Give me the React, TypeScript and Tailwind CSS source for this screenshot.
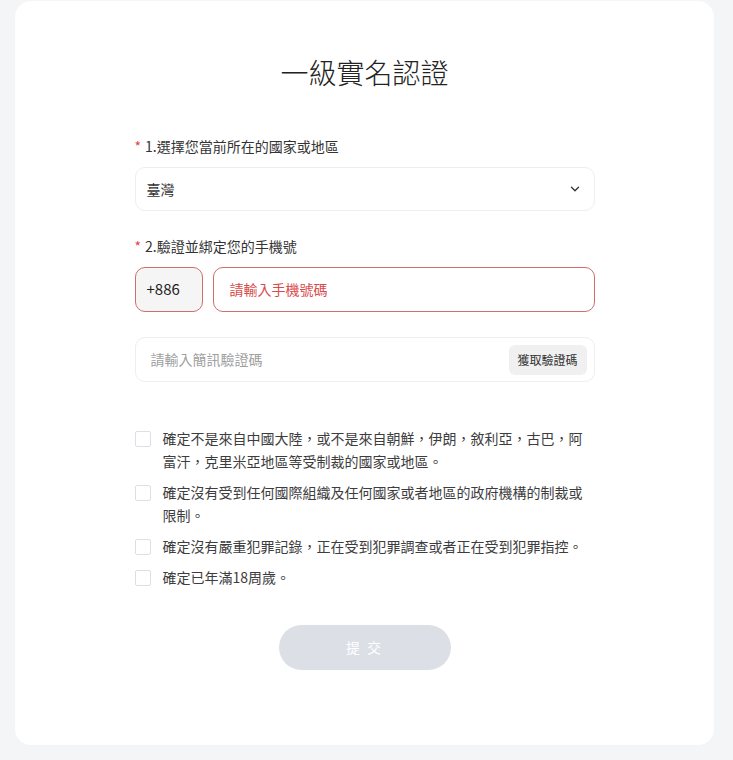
import React from "react";

const font = { fontFamily: '"Noto Sans CJK TC", "Noto Sans", sans-serif' };

function Check({ text }: { text: string }) {
  return (
    <div className="flex items-start gap-3">
      <div className="mt-[3.5px] h-4 w-4 shrink-0 rounded-[2px] border border-[#dcdfe6] bg-white" />
      <div className="text-[14px] leading-[23px] text-[#3d3d3d]">{text}</div>
    </div>
  );
}

export default function App() {
  return (
    <div className="min-h-[760px] w-full bg-[#f4f5f7] pt-[1px]" style={font}>
      <div className="ml-[15px] flex h-[744px] w-[699px] flex-col items-center rounded-[16px] bg-white">
        <h1 className="mt-[51px] text-[28px] font-light leading-[40px] text-[#222]">一級實名認證</h1>
        <div className="mt-[44px] flex w-[460px] flex-col">
          <div className="flex items-center text-[14px] leading-[20px] text-[#333]">
            <span className="mr-[4px] text-[#e04848]">*</span>
            <span>1.選擇您當前所在的國家或地區</span>
          </div>
          <div className="mt-[11px] flex h-[44px] items-center justify-between rounded-[10px] border border-[#eceef0] pl-[11px] pr-[12px]">
            <span className="text-[14px] text-[#333]">臺灣</span>
            <svg width="14" height="14" viewBox="0 0 24 24" fill="none" stroke="#333" strokeWidth="2.2" strokeLinecap="round" strokeLinejoin="round">
              <path d="M6 9l6 6 6-6" />
            </svg>
          </div>
          <div className="mt-[25px] flex items-center text-[14px] leading-[20px] text-[#333]">
            <span className="mr-[4px] text-[#e04848]">*</span>
            <span>2.驗證並綁定您的手機號</span>
          </div>
          <div className="mt-[11px] flex h-[45px] gap-[10px]">
            <div className="flex w-[68px] items-center rounded-[10px] border border-[#cf6e6e] bg-[#f5f5f5] pl-[11px] text-[15px] text-[#222]">
              +886
            </div>
            <div className="flex flex-1 items-center rounded-[10px] border border-[#cf6e6e] pl-[16px] text-[14px] text-[#d84b4b]">
              請輸入手機號碼
            </div>
          </div>
          <div className="mt-[25px] flex h-[45px] items-center justify-between rounded-[10px] border border-[#eceef0] pl-[15px] pr-[7px]">
            <span className="text-[14px] text-[#a0a0a0]">請輸入簡訊驗證碼</span>
            <div className="flex h-[30px] w-[78px] items-center justify-center rounded-[6px] bg-[#f0f0f0] text-[12px] text-[#333]">
              獲取驗證碼
            </div>
          </div>
          <div className="mt-[45px] flex flex-col gap-[8px]">
            <Check text="確定不是來自中國大陸，或不是來自朝鮮，伊朗，敘利亞，古巴，阿富汗，克里米亞地區等受制裁的國家或地區。" />
            <Check text="確定沒有受到任何國際組織及任何國家或者地區的政府機構的制裁或限制。" />
            <Check text="確定沒有嚴重犯罪記錄，正在受到犯罪調查或者正在受到犯罪指控。" />
            <Check text="確定已年滿18周歲。" />
          </div>
        </div>
        <div className="mt-[36px] flex h-[45px] w-[172px] items-center justify-center rounded-full bg-[#dcdfe6] text-[14px] tracking-[2px] text-white">
          提 交
        </div>
      </div>
    </div>
  );
}
